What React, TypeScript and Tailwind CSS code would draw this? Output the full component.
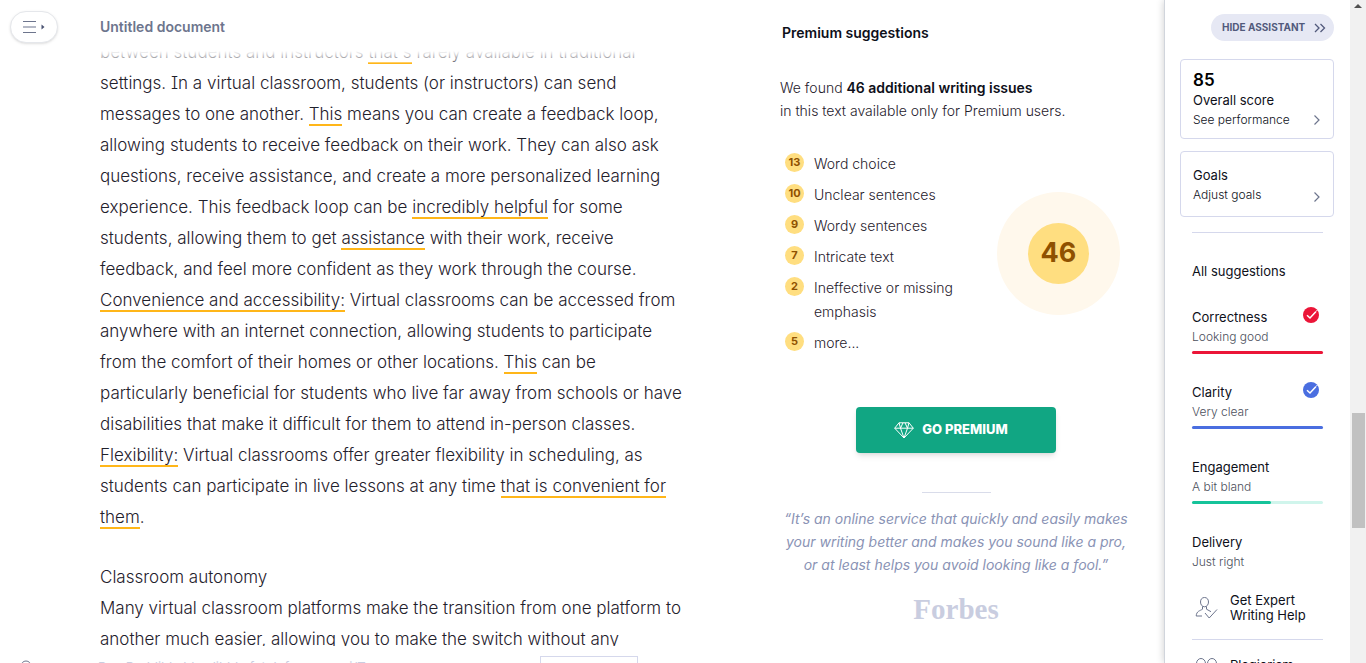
import type { ReactNode } from 'react'

const documentLines: ReactNode[] = [
  <>between students and instructors <Mark>that&apos;s</Mark> rarely available in traditional</>,
  <>settings. In a virtual classroom, students (or instructors) can send</>,
  <>messages to one another. <Mark>This</Mark> means you can create a feedback loop,</>,
  <>allowing students to receive feedback on their work. They can also ask</>,
  <>questions, receive assistance, and create a more personalized learning</>,
  <>experience. This feedback loop can be <Mark>incredibly helpful</Mark> for some</>,
  <>students, allowing them to get <Mark>assistance</Mark> with their work, receive</>,
  <>feedback, and feel more confident as they work through the course.</>,
  <><Mark>Convenience and accessibility:</Mark> Virtual classrooms can be accessed from</>,
  <>anywhere with an internet connection, allowing students to participate</>,
  <>from the comfort of their homes or other locations. <Mark>This</Mark> can be</>,
  <>particularly beneficial for students who live far away from schools or have</>,
  <>disabilities that make it difficult for them to attend in-person classes.</>,
  <><Mark>Flexibility:</Mark> Virtual classrooms offer greater flexibility in scheduling, as</>,
  <>students can participate in live lessons at any time <Mark>that is convenient for</Mark></>,
  <><Mark>them</Mark>.</>,
]

const autonomyLines = [
  'Classroom autonomy',
  'Many virtual classroom platforms make the transition from one platform to',
  'another much easier, allowing you to make the switch without any',
]

const issues = [
  { count: 13, label: 'Word choice' },
  { count: 10, label: 'Unclear sentences' },
  { count: 9, label: 'Wordy sentences' },
  { count: 7, label: 'Intricate text' },
  { count: 2, label: 'Ineffective or missing emphasis' },
  { count: 5, label: 'more...' },
]

const scores = [
  { name: 'Correctness', note: 'Looking good', value: 100, bar: 'bg-[#eb1538]', track: 'bg-[#fbd0d7]', check: 'text-[#eb1538]' },
  { name: 'Clarity', note: 'Very clear', value: 100, bar: 'bg-[#4a6ee0]', track: 'bg-[#dbe2f9]', check: 'text-[#4a6ee0]' },
  { name: 'Engagement', note: 'A bit bland', value: 60, bar: 'bg-[#15c39a]', track: 'bg-[#d0f5ec]', check: '' },
]

function Mark({ children }: { children: ReactNode }) {
  return <span className="border-b-2 border-[#ffb619]">{children}</span>
}

function Chevron() {
  return (
    <svg className="h-3 w-2 text-[#6d758d]" viewBox="0 0 8 12" fill="none" stroke="currentColor" strokeWidth="1.2">
      <path d="M1.5 1.5 6 6l-4.500 4.500" />
    </svg>
  )
}

function CheckBadge({ className }: { className: string }) {
  return (
    <svg className={`size-4 ${className}`} viewBox="0 0 16 16" fill="none">
      <circle cx="8" cy="8" r="8" fill="currentColor" />
      <path d="M4 8.200 7 11l5.800-6.300" stroke="#fff" strokeWidth="1.500" />
      <path d="M12.800 4.700 15 2.300" stroke="#fff" strokeWidth="1" />
    </svg>
  )
}

function Editor() {
  return (
    <main className="flex min-w-0 flex-1 flex-col">
      <header className="flex items-start pt-[11px] pl-[10px]">
        <button
          aria-label="Open menu"
          className="flex h-8 w-12 shrink-0 items-center justify-center rounded-full border border-gray-200 bg-white shadow"
        >
          <svg className="h-4 w-6" viewBox="0 0 24 16" fill="none">
            <path d="M1 2.500h13M1 8h13M1 13.500h13" stroke="#6d758d" strokeWidth="1.200" />
            <path d="m19.500 5.500 3 2.500-3 2.500z" fill="#4b5372" />
          </svg>
        </button>
        <h1 className="pt-[6px] pl-[42px] text-[14px] leading-5 font-semibold text-[#6d758d]">Untitled document</h1>
      </header>
      <article className="relative mt-2 min-h-0 flex-1 overflow-hidden pl-[100px]">
        <div className="-mt-[14px] text-[17px] leading-[31px] font-light whitespace-nowrap text-[#1f212c] [font-feature-settings:'cv08']">
          {documentLines.map((line, i) => (
            <p key={i}>{line}</p>
          ))}
          <div className="mt-[29px]">
            {autonomyLines.map((line) => (
              <p key={line}>{line}</p>
            ))}
          </div>
        </div>
        <div className="absolute inset-x-0 top-0 h-3 bg-linear-to-b from-white to-white/30" />
      </article>
      <footer className="flex h-[17px] shrink-0 items-start overflow-hidden pl-5">
        <svg className="mt-[14px] size-3 shrink-0" viewBox="0 0 12 12" fill="none" stroke="#6d758d">
          <circle cx="6" cy="6" r="5" />
        </svg>
        <p className="w-[508px] shrink-0 pt-[11px] pl-[66px] text-[13px] leading-5 text-[#c9cde0]">
          Boo Boddibla blac libblu fotulnfawwwsw i/T
        </p>
        <button aria-label="Document statistics" className="mt-[10px] h-8 w-[98px] shrink-0 border border-[#d5d8ec] bg-white" />
      </footer>
    </main>
  )
}

function Premium() {
  return (
    <section className="mr-2 w-[400px] shrink-0 px-6 pt-[23px] text-[#1f212c]">
      <h2 className="pl-[2px] text-[14px] leading-5 font-semibold text-[#0e101a]">Premium suggestions</h2>
      <p className="pt-[33px] text-[14px] leading-[23px] font-light">
        We found <b className="font-semibold text-[#0e101a]">46 additional writing issues</b>
        <br />
        in this text available only for Premium users.
      </p>
      <div className="flex items-start justify-between pt-[30px]">
        <ul className="space-y-[7px] pl-[5px] text-[14px] leading-6 font-light">
          {issues.map(({ count, label }) => (
            <li key={label} className="flex items-start gap-[10px]">
              <span className="mt-px flex size-[19px] shrink-0 items-center justify-center rounded-full bg-[#ffde80] text-[11px] leading-none font-bold text-[#8f5100]">
                {count}
              </span>
              <span className="w-[150px]">{label}</span>
            </li>
          ))}
        </ul>
        <div className="mt-10 mr-3 flex size-[123px] items-center justify-center rounded-full bg-[#fff8ec]">
          <div className="flex size-[61px] items-center justify-center rounded-full bg-[#ffde80] text-[27px] font-bold text-[#8f5100]">
            46
          </div>
        </div>
      </div>
      <div className="flex flex-col items-center pt-[52px]">
        <button className="flex h-[46px] w-[200px] items-center justify-center gap-2 rounded bg-[#11a683] pr-[10px] text-[13px] font-extrabold text-white shadow-md">
          <svg className="h-[17px] w-5" viewBox="0 0 20 17" fill="none" stroke="currentColor" strokeLinejoin="round">
            <path d="M5 .8h10l4.300 5.400L10 16 .7 6.200zM.7 6.200h18.600M5 .8l1.500 5.400L10 16l3.500-9.800L15 .8M6.500 6.200 9 .8M13.500 6.200 11 .8" />
          </svg>
          GO PREMIUM
        </button>
        <hr className="mt-[39px] w-[69px] border-[#d9dcea]" />
        <blockquote className="pt-[14px] text-center text-[14px] leading-[23px] whitespace-nowrap text-[#8a93b5] italic">
          “It’s an online service that quickly and easily makes
          <br />
          your writing better and makes you sound like a pro,
          <br />
          or at least helps you avoid looking like a fool.”
        </blockquote>
        <cite className="pt-4 font-['Liberation_Serif',serif] text-[29px] leading-[34px] font-bold text-[#c9cde0] not-italic">Forbes</cite>
      </div>
    </section>
  )
}

function Assistant() {
  return (
    <aside className="flex w-[186px] shrink-0 flex-col border-l border-gray-300 pt-[14px] pr-4 pl-[15px] text-[#0e101a] shadow-[0_0_8px_rgba(0,0,0,0.2)]">
      <button className="flex h-[27px] w-[123px] shrink-0 items-center justify-between self-end rounded-full bg-[#e6e8f4] pr-2 pl-[11px] text-[10px] font-bold text-[#525a7c]">
        HIDE ASSISTANT
        <svg className="h-[10px] w-3" viewBox="0 0 12 10" fill="none" stroke="currentColor" strokeWidth="1.300">
          <path d="m1 1 4 4-4 4M6.500 1l4 4-4 4" />
        </svg>
      </button>
      <button className="mt-[18px] flex h-20 shrink-0 items-end justify-between rounded border border-[#d5d8ec] px-3 pb-2 text-left">
        <span>
          <span className="block text-[17px] leading-[22px] font-semibold text-black">85</span>
          <span className="block text-[13px] leading-[18px]">Overall score</span>
          <span className="block text-[12px] leading-[21px] font-light">See performance</span>
        </span>
        <span className="pb-1"><Chevron /></span>
      </button>
      <button className="mt-3 flex h-[66px] shrink-0 items-end justify-between rounded border border-[#d5d8ec] px-3 pb-[11px] text-left">
        <span>
          <span className="block text-[13px] leading-5">Goals</span>
          <span className="block text-[12px] leading-5 font-light">Adjust goals</span>
        </span>
        <span className="pb-[2px]"><Chevron /></span>
      </button>
      <div className="mt-[15px] mr-[11px] ml-3">
        <hr className="border-[#d5d8ec]" />
        <h2 className="pt-7 text-[13px] leading-5">All suggestions</h2>
        <div className="space-y-7 pt-[26px]">
          {scores.map(({ name, note, value, bar, track, check }) => (
            <div key={name}>
              <div className="flex items-start justify-between pr-1">
                <h3 className="text-[13px] leading-5">{name}</h3>
                {check && <CheckBadge className={check} />}
              </div>
              <p className="text-[12px] leading-5 font-light text-[#4c4f5c]">{note}</p>
              <div className={`mt-1 h-[3px] rounded-full ${track}`}>
                <div className={`h-full rounded-full ${bar}`} style={{ width: `${value}%` }} />
              </div>
            </div>
          ))}
        </div>
        <h3 className="pt-7 text-[13px] leading-5">Delivery</h3>
        <p className="text-[12px] leading-5 font-light text-[#4c4f5c]">Just right</p>
        <button className="mt-[21px] flex items-center gap-3 pl-[3px] text-left text-[13px] leading-[15px]">
          <svg className="h-6 w-[23px] shrink-0" viewBox="0 0 23 24" fill="none" stroke="#6d758d">
            <path d="M9.500 1.500C7 1.500 5.500 3.300 5.500 6S7.200 10.800 9.500 10.800 13.500 8.700 13.500 6 12 1.500 9.500 1.500zM7.500 10.500v2.700C5 14.800 1.500 15 1.200 20H7M11.500 10.500v2.700l4.500 2.500M10 17l4.200 5L22 13.500" />
          </svg>
          <span>Get Expert Writing Help</span>
        </button>
        <hr className="mt-4 border-[#d5d8ec]" />
        <button className="mt-[15px] flex gap-3 pl-[3px] text-[13px] leading-5">
          <svg className="mt-[3px] h-6 w-[23px] shrink-0" viewBox="0 0 23 24" fill="none" stroke="#6d758d">
            <ellipse cx="6" cy="5.500" rx="4.500" ry="5" />
            <ellipse cx="17" cy="5.500" rx="4.500" ry="5" />
          </svg>
          Plagiarism
        </button>
      </div>
    </aside>
  )
}

function ScrollRail() {
  return (
    <div className="flex w-4 shrink-0 flex-col items-center bg-[#f1f1f1]">
      <svg className="h-[413px] w-4 shrink-0" viewBox="0 0 16 413">
        <path d="m4 8 4-4 4 4z" fill="#505050" />
      </svg>
      <div className="h-[115px] w-[13px] shrink-0 bg-[#c1c1c1]" />
    </div>
  )
}

export default function App() {
  return (
    <div className="flex h-screen overflow-hidden bg-white font-['Inter',sans-serif]">
      <Editor />
      <Premium />
      <Assistant />
      <ScrollRail />
    </div>
  )
}
